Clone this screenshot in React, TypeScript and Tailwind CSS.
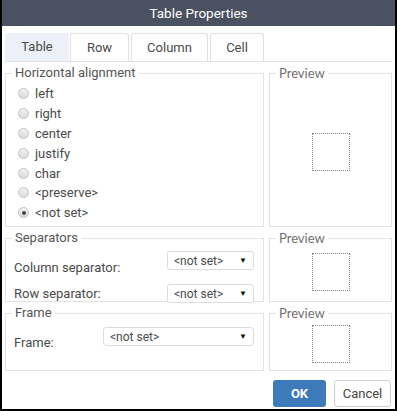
import React from "react";

const font = { fontFamily: "Roboto, 'Liberation Sans', sans-serif" };

function Radio({ label, checked }: { label: string; checked?: boolean }) {
  return (
    <div className="flex items-center h-[19.8px]">
      <span className="w-[11px] h-[11px] rounded-full border border-[#c2c2c2] bg-linear-to-b from-[#f2f2f2] to-[#dadada] flex items-center justify-center">
        {checked && <span className="w-[4px] h-[4px] rounded-full bg-[#444]" />}
      </span>
      <span className="ml-[6px] text-[13px] text-[#4a4a4a] leading-none">{label}</span>
    </div>
  );
}

function Select({ w }: { w: string }) {
  return (
    <div
      className={`${w} h-[19px] border border-[#dcdcdc] rounded-[3px] bg-white flex items-center justify-between pl-[6px] pr-[6px]`}
    >
      <span className="text-[12px] text-[#4a4a4a] leading-none">&lt;not set&gt;</span>
      <span className="text-[8px] text-[#111] leading-none">▼</span>
    </div>
  );
}

function Legend({ children, preview }: { children: React.ReactNode; preview?: boolean }) {
  return (
    <legend
      className={`ml-[6px] px-[3px] text-[13px] leading-[16px] ${preview ? "text-[#707070]" : "text-[#555]"}`}
      style={preview ? { fontFamily: "Lato, 'Open Sans', sans-serif" } : undefined}
    >
      {children}
    </legend>
  );
}

function Preview() {
  return (
    <fieldset className="border border-[#e3e3e3] h-full flex flex-col">
      <Legend preview>Preview</Legend>
      <div className="flex-1 flex items-center justify-center pb-[4px]">
        <div className="w-[38px] h-[38px] border border-dotted border-[#8a8a8a]" />
      </div>
    </fieldset>
  );
}

export default function App() {
  return (
    <div
      className="w-[397px] h-[411px] bg-white border-x-2 border-b-2 border-black flex flex-col"
      style={font}
    >
      <div className="h-[26px] bg-[#4a5261] flex items-center justify-center text-white text-[13.5px]">
        Table Properties
      </div>
      <div className="px-[3px] pt-[7px] flex flex-col">
        <div className="flex items-end h-[29px] border-b border-[#e3e3e3]">
          <div className="w-[64px] h-[28px] bg-[#edf0f9] rounded-t-[3px] flex items-center justify-center text-[13px] text-[#4a4a4a]">
            Table
          </div>
          <div className="ml-[1px] w-[59px] h-[28px] border border-b-0 border-[#e0e0e0] rounded-t-[3px] flex items-center justify-center text-[13px] text-[#4a4a4a]">
            Row
          </div>
          <div className="ml-[2px] w-[77px] h-[28px] border border-b-0 border-[#e0e0e0] rounded-t-[3px] flex items-center justify-center text-[13px] text-[#4a4a4a]">
            Column
          </div>
          <div className="ml-[2px] w-[54px] h-[28px] border border-b-0 border-[#e0e0e0] rounded-t-[3px] flex items-center justify-center text-[13px] text-[#4a4a4a]">
            Cell
          </div>
        </div>

        <div className="mt-[3px] grid grid-cols-[259px_123px] grid-rows-[162px_72px_66px] gap-x-[5px] gap-y-[3px]">
          <fieldset className="border border-[#e3e3e3] h-full">
            <Legend>Horizontal alignment</Legend>
            <div className="pl-[12px] pt-[3px] flex flex-col">
              <Radio label="left" />
              <Radio label="right" />
              <Radio label="center" />
              <Radio label="justify" />
              <Radio label="char" />
              <Radio label="<preserve>" />
              <Radio label="<not set>" checked />
            </div>
          </fieldset>
          <Preview />

          <fieldset className="border border-[#e3e3e3] h-full">
            <Legend>Separators</Legend>
            <div className="pl-[8px] pr-[9px] pt-[5px] flex flex-col gap-[10px]">
              <div className="flex justify-between items-start">
                <span className="text-[13px] text-[#4a4a4a] leading-none pt-[10px]">Column separator:</span>
                <Select w="w-[87px]" />
              </div>
              <div className="flex justify-between items-center">
                <span className="text-[13px] text-[#4a4a4a] leading-none">Row separator:</span>
                <Select w="w-[87px]" />
              </div>
            </div>
          </fieldset>
          <Preview />

          <fieldset className="border border-[#e3e3e3] h-full">
            <Legend>Frame</Legend>
            <div className="pl-[8px] pr-[9px] pt-[6px] flex justify-between items-start">
              <span className="text-[13px] text-[#4a4a4a] leading-none pt-[9px]">Frame:</span>
              <Select w="w-[151px]" />
            </div>
          </fieldset>
          <Preview />
        </div>

        <div className="mt-[9px] flex justify-end gap-[8px] pr-[1px]">
          <button className="w-[53px] h-[27px] rounded-[3px] bg-[#3d7ab9] text-white text-[13px] font-bold">
            OK
          </button>
          <button className="w-[57px] h-[27px] rounded-[3px] border border-[#cfcfcf] bg-white text-[#444] text-[13px]">
            Cancel
          </button>
        </div>
      </div>
    </div>
  );
}
